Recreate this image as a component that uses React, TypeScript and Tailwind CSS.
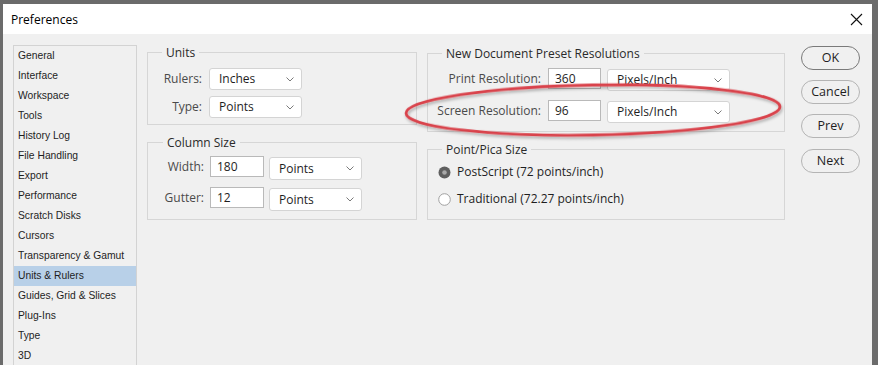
import React from "react";

const items = [
  "General",
  "Interface",
  "Workspace",
  "Tools",
  "History Log",
  "File Handling",
  "Export",
  "Performance",
  "Scratch Disks",
  "Cursors",
  "Transparency & Gamut",
  "Units & Rulers",
  "Guides, Grid & Slices",
  "Plug-Ins",
  "Type",
  "3D",
];

function Chevron() {
  return (
    <svg width="8" height="5" viewBox="0 0 8 5" className="shrink-0">
      <polyline points="0.5,0.5 4,4 7.5,0.5" fill="none" stroke="#7a7a7a" strokeWidth="1" />
    </svg>
  );
}

function Select({ value, className }: { value: string; className: string }) {
  return (
    <div
      className={
        "flex items-center justify-between bg-white border border-[#d4d4d4] rounded-[3px] pl-[9px] pr-[7px] text-[#1e1e1e] " +
        className
      }
    >
      <span>{value}</span>
      <Chevron />
    </div>
  );
}

function Input({ value, className }: { value: string; className: string }) {
  return (
    <div className={"flex items-center bg-white border border-[#b9b9b9] pl-[6px] text-[#1e1e1e] " + className}>
      {value}
    </div>
  );
}

function Radio({ checked }: { checked: boolean }) {
  return (
    <svg width="13" height="13" viewBox="0 0 13 13" className="shrink-0">
      {checked ? (
        <>
          <circle cx="6.5" cy="6.5" r="6" fill="#5f5f5f" />
          <circle cx="6.5" cy="6.5" r="2.3" fill="#a9a9a9" />
        </>
      ) : (
        <circle cx="6.5" cy="6.5" r="5.8" fill="#ffffff" stroke="#a0a0a0" strokeWidth="1" />
      )}
    </svg>
  );
}

function Btn({ label, dark }: { label: string; dark?: boolean }) {
  return (
    <div
      className={
        "w-[59px] h-[24px] rounded-full flex items-center justify-center text-[#1e1e1e] text-[12.5px] border " +
        (dark ? "border-[#7a7a7a]" : "border-[#b4b4b4]")
      }
    >
      {label}
    </div>
  );
}

function Legend({ text, className }: { text: string; className: string }) {
  return (
    <legend className={"px-[4px] text-[#2a2a2a] leading-[16px] " + className}>
      <span className="inline-block translate-y-[1px]">{text}</span>
    </legend>
  );
}

export default function App() {
  return (
    <div className="relative w-[878px] h-[365px] overflow-hidden bg-[#6b6b6b] font-['Open_Sans',sans-serif] text-[12px] leading-[16px]">
      <div className="ml-[3px] mt-[4px] w-[869px] h-[400px] flex flex-col">
        <div className="h-[30px] bg-white flex items-center justify-between pl-[8px] pr-[9px] pt-[2px] text-[#000]">
          <span className="text-[12px]">Preferences</span>
          <svg width="13" height="13" viewBox="0 0 13 13" className="-mt-[2px]">
            <path d="M1 1L12 12M12 1L1 12" stroke="#111" strokeWidth="1.1" />
          </svg>
        </div>
        <div className="flex-1 bg-[#f0f0f0] flex pl-[10px] pt-[10px]">
          {/* sidebar */}
          <div className="mt-[1px] w-[124px] h-[340px] border border-[#d3d3d3] bg-[#f0f0f0] font-['Liberation_Sans',sans-serif] text-[10.3px] text-[#1e1e1e]">
            {items.map((it) => (
              <div
                key={it}
                className={
                  "h-[20px] flex items-center pl-[4px] pb-[1px] " + (it === "Units & Rulers" ? "bg-[#b8d0e8]" : "")
                }
              >
                {it}
              </div>
            ))}
          </div>

          {/* middle column */}
          <div className="ml-[10px] w-[270px] flex flex-col gap-[9px]">
            <fieldset className="h-[81px] border border-[#d6d6d6] px-0">
              <Legend text="Units" className="ml-[14px]" />
              <div className="flex flex-col gap-[6px] mt-[8px]">
                <div className="flex items-center">
                  <span className="w-[54px] text-right text-[#4a4a4a]">Rulers:</span>
                  <Select value="Inches" className="ml-[7px] w-[93px] h-[22px]" />
                </div>
                <div className="flex items-center">
                  <span className="w-[54px] text-right text-[#4a4a4a]">Type:</span>
                  <Select value="Points" className="ml-[7px] w-[93px] h-[22px]" />
                </div>
              </div>
            </fieldset>
            <fieldset className="h-[86px] border border-[#d6d6d6] px-0">
              <Legend text="Column Size" className="ml-[15px]" />
              <div className="flex flex-col gap-[7px] mt-[6px]">
                <div className="flex items-start">
                  <span className="w-[56px] h-[21px] flex items-center justify-end text-[#4a4a4a]">Width:</span>
                  <Input value="180" className="ml-[6px] w-[54px] h-[21px]" />
                  <Select value="Points" className="ml-[5px] mt-[1px] w-[93px] h-[23px]" />
                </div>
                <div className="flex items-start">
                  <span className="w-[56px] h-[21px] flex items-center justify-end text-[#4a4a4a]">Gutter:</span>
                  <Input value="12" className="ml-[6px] w-[54px] h-[21px]" />
                  <Select value="Points" className="ml-[5px] mt-[1px] w-[93px] h-[23px]" />
                </div>
              </div>
            </fieldset>
          </div>

          {/* right column */}
          <div className="ml-[10px] w-[358px] flex flex-col gap-[9px] mt-[1px]">
            <fieldset className="h-[87px] border border-[#d6d6d6] px-0">
              <Legend text="New Document Preset Resolutions" className="ml-[14px]" />
              <div className="flex flex-col gap-[9px] mt-[7px]">
                <div className="flex items-start">
                  <span className="w-[113px] h-[21px] flex items-center justify-end text-[#4a4a4a]">
                    Print Resolution:
                  </span>
                  <Input value="360" className="ml-[7px] w-[53px] h-[21px]" />
                  <Select value="Pixels/Inch" className="ml-[6px] mt-[1px] w-[123px] h-[22px]" />
                </div>
                <div className="flex items-start">
                  <span className="w-[113px] h-[21px] flex items-center justify-end text-[#4a4a4a]">
                    Screen Resolution:
                  </span>
                  <Input value="96" className="ml-[7px] w-[53px] h-[21px]" />
                  <Select value="Pixels/Inch" className="ml-[6px] mt-[1px] w-[123px] h-[22px]" />
                </div>
              </div>
            </fieldset>
            <fieldset className="h-[79px] border border-[#d6d6d6] px-0">
              <Legend text="Point/Pica Size" className="ml-[14px]" />
              <div className="flex flex-col mt-[5px] gap-[7px]">
                <div className="h-[20px] flex items-center pl-[10px] gap-[6px] text-[#1e1e1e]">
                  <Radio checked />
                  <span>PostScript (72 points/inch)</span>
                </div>
                <div className="h-[20px] flex items-center pl-[10px] gap-[6px] text-[#1e1e1e]">
                  <Radio checked={false} />
                  <span>Traditional (72.27 points/inch)</span>
                </div>
              </div>
            </fieldset>
          </div>

          {/* buttons */}
          <div className="ml-[16px] mt-[2px] flex flex-col">
            <Btn label="OK" dark />
            <div className="mt-[10px]">
              <Btn label="Cancel" />
            </div>
            <div className="mt-[10px]">
              <Btn label="Prev" />
            </div>
            <div className="mt-[11px]">
              <Btn label="Next" />
            </div>
          </div>
        </div>
      </div>

      {/* red annotation ellipse */}
      <svg className="absolute left-0 top-0 pointer-events-none" width="878" height="365" viewBox="0 0 878 365">
        <defs>
          <filter id="sh" x="-10%" y="-50%" width="120%" height="200%">
            <feDropShadow dx="1" dy="2" stdDeviation="1.5" floodColor="#000" floodOpacity="0.3" />
          </filter>
        </defs>
        <ellipse
          cx="593"
          cy="110"
          rx="187"
          ry="25"
          transform="rotate(-1 593 110)"
          fill="none"
          stroke="#d9434b"
          strokeWidth="2.8"
          filter="url(#sh)"
        />
      </svg>
    </div>
  );
}
